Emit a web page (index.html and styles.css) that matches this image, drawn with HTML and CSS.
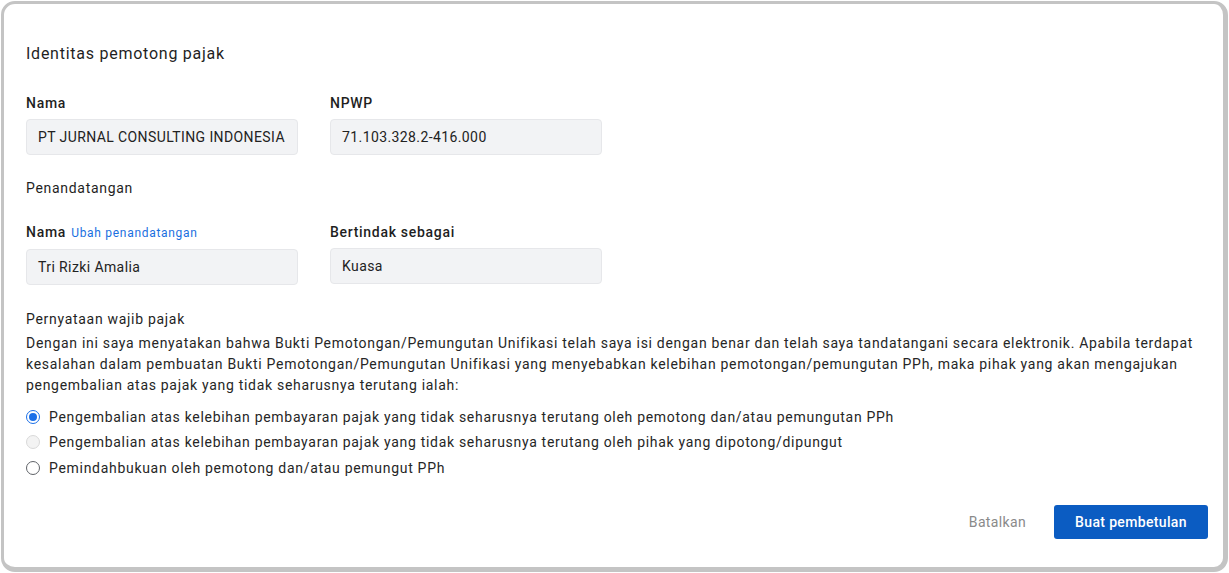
FILE: index.html
```html
<!DOCTYPE html>
<html lang="id">
<head>
<meta charset="utf-8">
<title>Identitas pemotong pajak</title>
<link rel="stylesheet" href="styles.css">
</head>
<body>
<div class="card">
  <h2 class="title">Identitas pemotong pajak</h2>

  <div class="row first-row">
    <div class="field">
      <div class="label">Nama</div>
      <div class="input">PT JURNAL CONSULTING INDONESIA</div>
    </div>
    <div class="field">
      <div class="label">NPWP</div>
      <div class="input">71.103.328.2-416.000</div>
    </div>
  </div>

  <div class="section-label">Penandatangan</div>

  <div class="row second-row">
    <div class="field">
      <div class="label">Nama <a class="link" href="#">Ubah penandatangan</a></div>
      <div class="input">Tri Rizki Amalia</div>
    </div>
    <div class="field">
      <div class="label">Bertindak sebagai</div>
      <div class="input">Kuasa</div>
    </div>
  </div>

  <div class="section-label statement-label">Pernyataan wajib pajak</div>
  <p class="statement">Dengan ini saya menyatakan bahwa Bukti Pemotongan/Pemungutan Unifikasi telah saya isi dengan benar dan telah saya tandatangani secara elektronik. Apabila terdapat kesalahan dalam pembuatan Bukti Pemotongan/Pemungutan Unifikasi yang menyebabkan kelebihan pemotongan/pemungutan PPh, maka pihak yang akan mengajukan pengembalian atas pajak yang tidak seharusnya terutang ialah:</p>

  <div class="options">
    <div class="option"><span class="radio checked"></span><span>Pengembalian atas kelebihan pembayaran pajak yang tidak seharusnya terutang oleh pemotong dan/atau pemungutan PPh</span></div>
    <div class="option"><span class="radio disabled"></span><span>Pengembalian atas kelebihan pembayaran pajak yang tidak seharusnya terutang oleh pihak yang dipotong/dipungut</span></div>
    <div class="option"><span class="radio"></span><span>Pemindahbukuan oleh pemotong dan/atau pemungut PPh</span></div>
  </div>

  <div class="actions">
    <button class="btn-text" type="button">Batalkan</button>
    <button class="btn-primary" type="button">Buat pembetulan</button>
  </div>
</div>
</body>
</html>
```

FILE: styles.css
```css
* { box-sizing: border-box; }

html, body {
  margin: 0;
  background: #ffffff;
}

body {
  padding: 1px 1px 1px 1px;
  font-family: Roboto, "Liberation Sans", Arial, sans-serif;
  color: #262626;
  font-size: 14px;
  letter-spacing: 0.7px;
}

.card {
  height: 571px;
  border-style: solid;
  border-color: #c4c4c4;
  border-width: 3px 5px 5px 3px;
  border-radius: 14px;
  background: #ffffff;
  padding: 38px 15px 0 22px;
}

.title {
  margin: 0;
  font-size: 16px;
  line-height: 24px;
  font-weight: 400;
  letter-spacing: 0.75px;
  color: #1f1f1f;
}

.row {
  display: flex;
  gap: 32px;
}

.first-row { margin-top: 27px; }
.second-row { margin-top: 24px; }

.field {
  width: 272px;
  display: flex;
  flex-direction: column;
  gap: 6px;
}

.label {
  font-size: 14px;
  line-height: 20px;
  font-weight: 500;
  color: #1f1f1f;
}

.link {
  font-size: 12px;
  font-weight: 400;
  color: #1a6fe0;
  text-decoration: none;
  margin-left: 1px;
}

.input {
  height: 36px;
  background: #f2f3f5;
  border: 1px solid #e6e7ea;
  border-radius: 4px;
  padding: 0 11px;
  display: flex;
  align-items: center;
  color: #222222;
  font-size: 14px;
  letter-spacing: 0.4px;
  white-space: nowrap;
}

.section-label {
  margin-top: 23px;
  font-size: 14px;
  line-height: 20px;
  font-weight: 400;
  color: #1f1f1f;
}

.statement-label { margin-top: 24px; }

.statement {
  margin: 4px 0 0 0;
  font-size: 14px;
  line-height: 21px;
  color: #262626;
  padding-right: 6px;
}

.options {
  margin-top: 8px;
  display: flex;
  flex-direction: column;
}

.option {
  height: 25.5px;
  display: flex;
  align-items: center;
  gap: 9px;
  color: #262626;
  font-size: 14px;
}

.radio {
  width: 14px;
  height: 14px;
  border-radius: 50%;
  border: 1px solid #5f6368;
  background: #fff;
  flex: none;
  position: relative;
}

.radio.checked {
  border-color: #1a6fe8;
}

.radio.checked::after {
  content: "";
  position: absolute;
  left: 2px;
  top: 2px;
  width: 8px;
  height: 8px;
  border-radius: 50%;
  background: #1a6fe8;
}

.radio.disabled {
  border-color: #d9d9d9;
  background: #f3f3f3;
}

.actions {
  margin-top: 24px;
  display: flex;
  justify-content: flex-end;
  align-items: center;
  gap: 28px;
}

.btn-text {
  background: none;
  border: none;
  font-family: inherit;
  font-size: 14px;
  letter-spacing: 0.35px;
  color: #8a8a8a;
  padding: 0;
  cursor: pointer;
}

.btn-primary {
  width: 154px;
  height: 34px;
  background: #0b5cc2;
  color: #ffffff;
  border: none;
  border-radius: 3px;
  font-family: inherit;
  font-size: 14px;
  font-weight: 500;
  letter-spacing: 0.35px;
  cursor: pointer;
}
```
